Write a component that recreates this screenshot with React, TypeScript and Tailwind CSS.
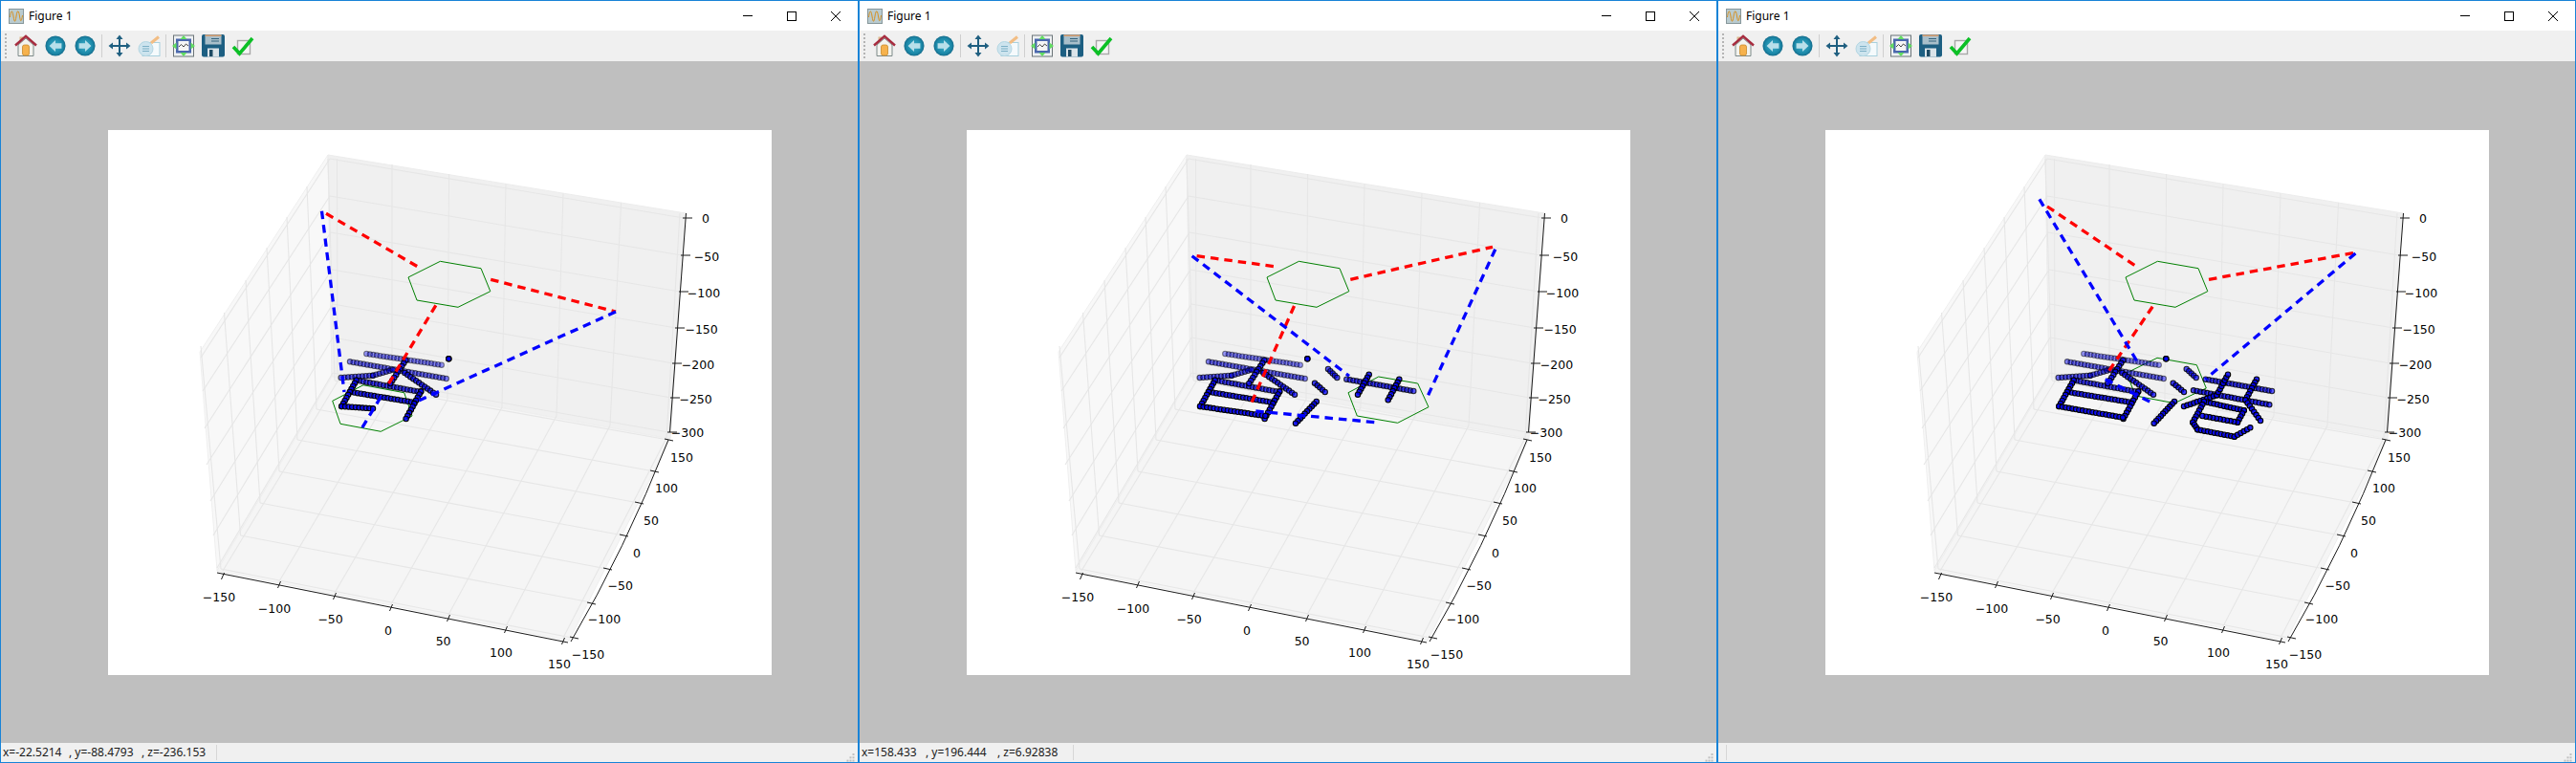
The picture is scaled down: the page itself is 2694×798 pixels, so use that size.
import { Fragment } from "react";

type Pt = [number, number];
type Stroke = { pts: Pt[]; a: number };
type PlotData = {
  status: string[];
  statusWidths: number[];
  sepLeft: number;
  red: [Pt, Pt][];
  blue: [Pt, Pt][];
  hexes: Pt[][];
  strokes: Stroke[];
};

const topHex: Pt[] = [[347.4, 137.3], [390, 144.7], [399.8, 168.7], [366, 185.3], [323, 178], [314, 154]];

// strokes shared by all three figures
const baseStrokes: Stroke[] = [
  { pts: [[270.3, 234], [348.7, 245.7]], a: 0.45 },
  { pts: [[253, 242.3], [353.7, 260]], a: 0.55 },
  { pts: [[243.7, 259], [277, 256.7], [297.7, 250.7]], a: 0.65 },
  { pts: [[259.7, 261.7], [327, 274]], a: 0.75 },
  { pts: [[310.3, 254], [343, 276.7]], a: 0.85 },
  { pts: [[311.3, 240.7], [295.3, 265]], a: 0.9 },
  { pts: [[254, 274], [320.5, 285]], a: 0.9 },
  { pts: [[259.7, 261.7], [244.3, 289]], a: 1 },
  { pts: [[327.3, 273.3], [311.6, 302]], a: 1 },
  { pts: [[356.3, 239.3], [356.3, 239.3]], a: 1 },
];

const windows: PlotData[] = [
  {
    status: ["x=-22.5214", ", y=-88.4793", ", z=-236.153"],
    statusWidths: [69, 76],
    sepLeft: 223,
    red: [
      [[228, 87.3], [325.8, 144]],
      [[400.2, 156.3], [531, 190]],
      [[342.8, 183.3], [292.3, 267.3]],
    ],
    blue: [
      [[223.5, 84.7], [247, 274]],
      [[531, 190], [320.3, 285]],
      [[285.3, 279], [263.7, 314.7]],
    ],
    hexes: [topHex, [[234.7, 283.3], [267, 266.7], [309.7, 274.7], [318, 299], [285.3, 315.3], [243, 307.3]]],
    strokes: [...baseStrokes, { pts: [[244.3, 289], [277, 291.3]], a: 1 }],
  },
  {
    status: ["x=158.433", ", y=196.444", ", z=6.92838"],
    statusWidths: [67, 75],
    sepLeft: 221,
    red: [
      [[240.6, 131.7], [326.5, 143.3]],
      [[401.3, 156.3], [550, 122.3]],
      [[342.5, 184], [296.6, 288]],
    ],
    blue: [
      [[235.6, 131.7], [400, 257.3]],
      [[552.8, 124.7], [482.6, 277.3]],
      [[302.3, 294], [427.3, 305.7]],
    ],
    hexes: [topHex, [[399, 274.7], [430.7, 258], [471.7, 265], [483, 289.7], [450.7, 306.3], [408.3, 299]]],
    strokes: [
      ...baseStrokes,
      { pts: [[244, 289], [312.3, 299]], a: 1 },
      { pts: [[378, 250], [387.3, 259]], a: 0.8 },
      { pts: [[364, 264.7], [374.7, 274]], a: 0.9 },
      { pts: [[365.7, 284], [344, 306.7]], a: 1 },
      { pts: [[397.3, 260.7], [467.3, 273]], a: 0.75 },
      { pts: [[420.7, 255.7], [409, 276.7]], a: 1 },
      { pts: [[452.3, 260.7], [440.7, 282.3]], a: 1 },
    ],
  },
  {
    status: [],
    statusWidths: [],
    sepLeft: 6,
    red: [
      [[232, 80], [326.2, 143.3]],
      [[401, 156.3], [553.4, 128.3]],
      [[342.2, 184.7], [294, 255.7]],
    ],
    blue: [
      [[223.8, 72.3], [326.2, 242.3]],
      [[554.4, 129], [397.3, 260.7]],
      [[292.7, 260.7], [342.7, 285.7]],
    ],
    hexes: [topHex, [[315, 254], [347, 238.3], [388.3, 245.7], [398.3, 270], [365, 285.7], [324.3, 278]]],
    strokes: [
      ...baseStrokes,
      { pts: [[244.3, 289], [311, 300.7]], a: 1 },
      { pts: [[377.7, 250], [387.7, 259]], a: 0.8 },
      { pts: [[363.7, 264.7], [375, 274]], a: 0.9 },
      { pts: [[365, 284], [343.7, 306.7]], a: 1 },
      { pts: [[397.7, 260.7], [467, 273]], a: 0.75 },
      { pts: [[385, 272.3], [464.3, 287.3]], a: 0.85 },
      { pts: [[375, 289], [409.3, 277.3], [421, 255.7]], a: 1 },
      { pts: [[451, 260.7], [439.3, 282.3], [455, 304]], a: 1 },
      { pts: [[396, 284], [437.7, 293.3], [431, 305.7], [394.3, 299]], a: 1 },
      { pts: [[396, 284], [384.3, 305.7], [389.3, 313.3], [427.7, 320.7], [444.3, 311.3]], a: 1 },
    ],
  },
];

// axes geometry, in figure pixels
const backTop: Pt[] = [[239.5, 30], [297, 36], [356.6, 46], [416, 56], [476, 66], [536.6, 76], [598, 87]];
const backBottom: Pt[] = [[240, 263], [297, 273], [355, 282], [412, 290], [469, 299], [525, 309], [584, 322]];
const backLeft: Pt[] = [[232, 30], [232, 69], [233, 107], [234, 146], [235, 182], [235, 217], [235, 254]];
const backRight: Pt[] = [[602, 92], [600, 131], [598, 169], [594, 207], [591, 244], [589, 280], [586, 316]];
const leftFront: Pt[] = [[97, 238], [99, 273], [101, 312], [103, 350], [107, 388], [110, 424], [114, 458]];
const leftTop: Pt[] = [[230, 30], [208, 59], [187, 91], [166, 123], [144, 157], [121.5, 191], [97, 226]];
const rowLeft: Pt[] = [[237, 262], [218, 292], [198, 324], [179, 357], [159, 390], [138.5, 424], [118, 459]];
const rowRight: Pt[] = [[586, 324], [571, 357], [555, 390], [539, 424], [522, 459], [505, 494], [485, 531]];
const colFront: Pt[] = [[120, 461], [179, 472], [237, 484], [296, 496], [356, 507], [416, 519], [476, 531]];

const xLabels: [string, number, number][] = [
  ["−150", 116, 488], ["−100", 174, 500], ["−50", 232.6, 511], ["0", 293, 523],
  ["50", 350.6, 534], ["100", 411, 546], ["150", 472, 558],
];
const yLabels: [string, number, number][] = [
  ["150", 600, 342], ["100", 584, 374], ["50", 568, 408], ["0", 553, 442],
  ["−50", 535.7, 476], ["−100", 519, 511], ["−150", 502, 548],
];
const zLabels: [string, number, number][] = [
  ["0", 625, 92], ["−50", 626, 132], ["−100", 623, 170], ["−150", 620.6, 208],
  ["−200", 617, 245], ["−250", 614.6, 281], ["−300", 606, 316],
];
const xTicks: Pt[] = [[120, 467], [179, 476], [237, 488], [296, 500], [356, 511], [416, 523], [476, 535]];
const yTicks: Pt[] = [[487, 531], [505, 495], [522, 459], [539, 424], [555, 390], [571, 357], [586, 324]];

function dots(pts: Pt[]) {
  const out: Pt[] = [];
  for (let i = 0; i < pts.length - 1; i++) {
    const [x1, y1] = pts[i];
    const [x2, y2] = pts[i + 1];
    const n = Math.max(1, Math.round(Math.hypot(x2 - x1, y2 - y1) / 3.6));
    for (let k = 0; k <= n; k++) out.push([x1 + ((x2 - x1) * k) / n, y1 + ((y2 - y1) * k) / n]);
  }
  return out;
}

function Plot({ data }: { data: PlotData }) {
  return (
    <svg viewBox="0 0 694 570" className="block h-full w-full font-['DejaVu_Sans',sans-serif] text-[12.5px]">
      <polygon points="96,232 230,26 234,258 114,461" fill="#f8f8f8" stroke="#efefef" />
      <polygon points="230,26 604,87 588,323 234,258" fill="#f0f0f0" stroke="#ececec" />
      <polygon points="234,258 588,323 482,534 114,461" fill="#f5f5f5" stroke="#eeeeee" />
      <g stroke="#e6e6e6" strokeWidth="1.1" fill="none">
        {backTop.map((p, i) => (
          <Fragment key={i}>
            <line x1={p[0]} y1={p[1]} x2={backBottom[i][0]} y2={backBottom[i][1]} />
            <line x1={backLeft[i][0]} y1={backLeft[i][1]} x2={backRight[i][0]} y2={backRight[i][1]} />
            <line x1={backLeft[i][0]} y1={backLeft[i][1]} x2={leftFront[i][0]} y2={leftFront[i][1]} />
            <line x1={leftTop[i][0]} y1={leftTop[i][1]} x2={rowLeft[i][0]} y2={rowLeft[i][1]} />
            <line x1={rowLeft[i][0]} y1={rowLeft[i][1]} x2={rowRight[i][0]} y2={rowRight[i][1]} />
            <line x1={backBottom[i][0]} y1={backBottom[i][1]} x2={colFront[i][0]} y2={colFront[i][1]} />
          </Fragment>
        ))}
      </g>
      <g stroke="#1a1a1a" strokeWidth="1" fill="none">
        <line x1="114" y1="463" x2="481" y2="536" />
        <path d="M484 535 Q540 440 586 324" />
        <line x1="604.5" y1="87" x2="587.5" y2="316" />
        {xTicks.map((p, i) => (
          <line key={i} x1={p[0] + 1.5} y1={p[1] - 4} x2={p[0] - 1.5} y2={p[1] + 3} />
        ))}
        {yTicks.map((p, i) => (
          <line key={i} x1={p[0] - 4} y1={p[1] - 1} x2={p[0] + 5} y2={p[1] + 1} />
        ))}
        {backRight.map((p, i) => (
          <line key={i} x1={p[0] - 1} y1={p[1]} x2={p[0] + 9} y2={p[1]} />
        ))}
      </g>
      <g fill="#000000" textAnchor="middle" dominantBaseline="central">
        {[...xLabels, ...yLabels, ...zLabels].map(([t, x, y], i) => (
          <text key={i} x={x} y={y}>{t}</text>
        ))}
      </g>
      {data.hexes.map((h, i) => (
        <polygon key={i} points={h.map((p) => p.join(",")).join(" ")} fill="none" stroke="#008000" strokeWidth="1" />
      ))}
      {data.strokes.map((s, i) => (
        <g key={i} fill="#0000ff" stroke="#000000" strokeWidth="1.1">
          {dots(s.pts).map((p, k) => (
            <circle key={k} cx={p[0]} cy={p[1]} r="2.7" fillOpacity={s.a * 0.85} strokeOpacity={s.a} />
          ))}
        </g>
      ))}
      <g fill="none" strokeWidth="3.3" strokeDasharray="8.5 6">
        {data.red.map((l, i) => (
          <line key={i} x1={l[0][0]} y1={l[0][1]} x2={l[1][0]} y2={l[1][1]} stroke="#ff0000" />
        ))}
        {data.blue.map((l, i) => (
          <line key={i} x1={l[0][0]} y1={l[0][1]} x2={l[1][0]} y2={l[1][1]} stroke="#0000ff" />
        ))}
      </g>
    </svg>
  );
}

function AppIcon() {
  return (
    <svg viewBox="0 0 16 16" className="h-4 w-4 shrink-0">
      <rect x="0.5" y="0.5" width="15" height="15" fill="#b9cbd0" stroke="#87979b" />
      <path d="M1.5 9 C2.5 1 4 1 5 8 S7 15 8 8 S10.5 1 11.5 8 S13.5 14 14.5 7" fill="none" stroke="#d8901f" strokeWidth="1" />
    </svg>
  );
}

function Ball({ back }: { back: boolean }) {
  return (
    <svg viewBox="0 0 24 24" className="h-[22px] w-[22px]">
      <defs>
        <radialGradient id="ball" cx="50%" cy="50%" r="55%">
          <stop offset="0%" stopColor="#3eb0cb" />
          <stop offset="70%" stopColor="#1b88a8" />
          <stop offset="100%" stopColor="#14607f" />
        </radialGradient>
      </defs>
      <circle cx="12" cy="12" r="11.5" fill="url(#ball)" />
      <polygon
        points={back ? "5,12 12,5.5 12,9 19,9 19,15 12,15 12,18.5" : "19,12 12,5.5 12,9 5,9 5,15 12,15 12,18.5"}
        fill="#b8dfea"
      />
    </svg>
  );
}

function HomeIcon() {
  return (
    <svg viewBox="0 0 24 24" className="h-[24px] w-[24px]">
      <rect x="5.5" y="2.5" width="3.5" height="7" fill="#dcb68c" />
      <polygon points="12,4 20,11 20,22.5 4,22.5 4,11" fill="#f3f3ee" stroke="#7d8a8a" strokeWidth="1" />
      <rect x="8.5" y="11" width="7" height="11" rx="2" fill="#f6b24d" stroke="#c98a2a" strokeWidth="0.8" />
      <path d="M1 11.5 L12 1.8 L23 11.5" fill="none" stroke="#a62b3e" strokeWidth="2.4" />
    </svg>
  );
}

function PanIcon() {
  return (
    <svg viewBox="0 0 24 24" className="h-[24px] w-[24px]" fill="#1f5f80">
      <rect x="3" y="11" width="18" height="2" />
      <rect x="11" y="3" width="2" height="18" />
      <polygon points="12,0.5 15.5,5 8.5,5" />
      <polygon points="12,23.5 15.5,19 8.5,19" />
      <polygon points="0.5,12 5,8.5 5,15.5" />
      <polygon points="23.5,12 19,8.5 19,15.5" />
    </svg>
  );
}

function ZoomIcon() {
  return (
    <svg viewBox="0 0 24 24" className="h-[24px] w-[24px]">
      <rect x="5" y="8.5" width="18" height="14" fill="#f5fafc" stroke="#a7d0dd" />
      <path d="M14 9 L22 2.5" stroke="#f2bd84" strokeWidth="3" />
      <circle cx="8.5" cy="15" r="7.5" fill="#cde4ee" stroke="#b4d6e2" />
      <path d="M5 12.5h7M5 15h7M5 17.5h7" stroke="#7db0c6" strokeWidth="1.2" />
    </svg>
  );
}

function ConfigIcon() {
  return (
    <svg viewBox="0 0 24 24" className="h-[24px] w-[24px]">
      <rect x="1.5" y="1" width="21" height="22" fill="#eef1f3" stroke="#6b7478" />
      <rect x="4" y="4.5" width="16" height="15" fill="#4a68ad" />
      <rect x="6.5" y="7" width="11" height="10" fill="#f5f5f5" />
      <path d="M7 13 L9.5 10.5 L12 13 L14.5 10 L17 12" fill="none" stroke="#333333" strokeWidth="0.9" />
      <g fill="#62dc62">
        <polygon points="12,1 15.5,5 8.5,5" />
        <polygon points="12,23 15.5,19 8.5,19" />
        <polygon points="0,12 4.5,8.5 4.5,15.5" />
        <polygon points="24,12 19.5,8.5 19.5,15.5" />
      </g>
    </svg>
  );
}

function SaveIcon() {
  return (
    <svg viewBox="0 0 24 24" className="h-[24px] w-[24px]">
      <rect x="0" y="0" width="24" height="23.5" rx="2" fill="#1d5f82" />
      <rect x="3.5" y="0.5" width="17" height="10" fill="#a9bfca" />
      <rect x="3.5" y="0.5" width="17" height="1.5" fill="#dd9f6e" />
      <path d="M10 4.5h8M10 7h8" stroke="#33627c" strokeWidth="1" />
      <rect x="6" y="14.5" width="12" height="9" fill="#dbe4e9" />
      <rect x="8" y="16" width="3.5" height="7" fill="#1d4a63" />
    </svg>
  );
}

function CheckIcon() {
  return (
    <svg viewBox="0 0 24 24" className="h-[24px] w-[24px]">
      <rect x="6.5" y="6.5" width="13" height="14" fill="#f5f5f5" stroke="#a8a8a8" strokeWidth="1.4" />
      <path d="M2 13 L8.5 20 L22 4" fill="none" stroke="#0cc026" strokeWidth="3.6" />
    </svg>
  );
}

function ToolButton({ children }: { children: React.ReactNode }) {
  return <div className="flex h-full w-[31px] shrink-0 items-center justify-center">{children}</div>;
}

function Separator() {
  return <div className="mx-[2px] h-[24px] w-px shrink-0 bg-[#cfcfcf]" />;
}

function Toolbar() {
  return (
    <div className="flex h-8 items-center bg-[#f0f0f0]">
      <div className="ml-[4px] mr-[4px] flex w-[2px] shrink-0 flex-col gap-[2px]">
        {[0, 1, 2, 3, 4, 5, 6].map((i) => (
          <span key={i} className="block h-[2px] w-[2px] bg-[#b4b4b4]" />
        ))}
      </div>
      <ToolButton><HomeIcon /></ToolButton>
      <ToolButton><Ball back /></ToolButton>
      <ToolButton><Ball back={false} /></ToolButton>
      <Separator />
      <ToolButton><PanIcon /></ToolButton>
      <ToolButton><ZoomIcon /></ToolButton>
      <Separator />
      <ToolButton><ConfigIcon /></ToolButton>
      <ToolButton><SaveIcon /></ToolButton>
      <ToolButton><CheckIcon /></ToolButton>
    </div>
  );
}

function TitleBar() {
  return (
    <div className="flex h-[31px] items-center bg-white pl-[8px]">
      <AppIcon />
      <span className="ml-[5px] font-['Noto_Sans',sans-serif] text-[12px] text-black">Figure 1</span>
      <div className="ml-auto flex">
        <div className="flex h-[31px] w-[46px] items-center justify-center">
          <div className="h-px w-[10px] bg-black" />
        </div>
        <div className="flex h-[31px] w-[46px] items-center justify-center">
          <div className="h-[10px] w-[10px] border border-black" />
        </div>
        <div className="flex h-[31px] w-[46px] items-center justify-center">
          <svg viewBox="0 0 10 10" className="h-[10px] w-[10px]" stroke="#000000" strokeWidth="1">
            <path d="M0 0 L10 10 M10 0 L0 10" />
          </svg>
        </div>
      </div>
    </div>
  );
}

function StatusBar({ data }: { data: PlotData }) {
  return (
    <div className="flex h-5 items-center bg-[#f0f0f0] pl-[2px] font-['Noto_Sans',sans-serif] text-[12px] text-[#1a1a1a]">
      <div className="flex shrink-0 whitespace-pre" style={{ width: data.sepLeft }}>
        {data.status.map((s, i) => (
          <span key={i} className="shrink-0" style={{ width: data.statusWidths[i] }}>
            {s}
          </span>
        ))}
      </div>
      <div className="h-[16px] w-px bg-[#d6d6d6]" />
      <svg viewBox="0 0 9 9" className="ml-auto mr-[3px] mt-[10px] h-[9px] w-[9px]" fill="#c0c0c0">
        <rect x="6.5" y="0" width="2" height="2" />
        <rect x="3.5" y="3.3" width="2" height="2" />
        <rect x="6.5" y="3.3" width="2" height="2" />
        <rect x="0.5" y="6.6" width="2" height="2" />
        <rect x="3.5" y="6.6" width="2" height="2" />
        <rect x="6.5" y="6.6" width="2" height="2" />
      </svg>
    </div>
  );
}

function FigureWindow({ data }: { data: PlotData }) {
  return (
    <div className="flex h-[798px] w-[898px] shrink-0 flex-col border border-[#1883d7]">
      <TitleBar />
      <Toolbar />
      <div className="flex-1 bg-[#bfbfbf] pl-[112px] pt-[72px]">
        <div className="h-[570px] w-[694px] bg-white">
          <Plot data={data} />
        </div>
      </div>
      <StatusBar data={data} />
    </div>
  );
}

export default function App() {
  return (
    <div className="flex h-[798px] w-[2694px] overflow-hidden">
      {windows.map((w, i) => (
        <FigureWindow key={i} data={w} />
      ))}
    </div>
  );
}
